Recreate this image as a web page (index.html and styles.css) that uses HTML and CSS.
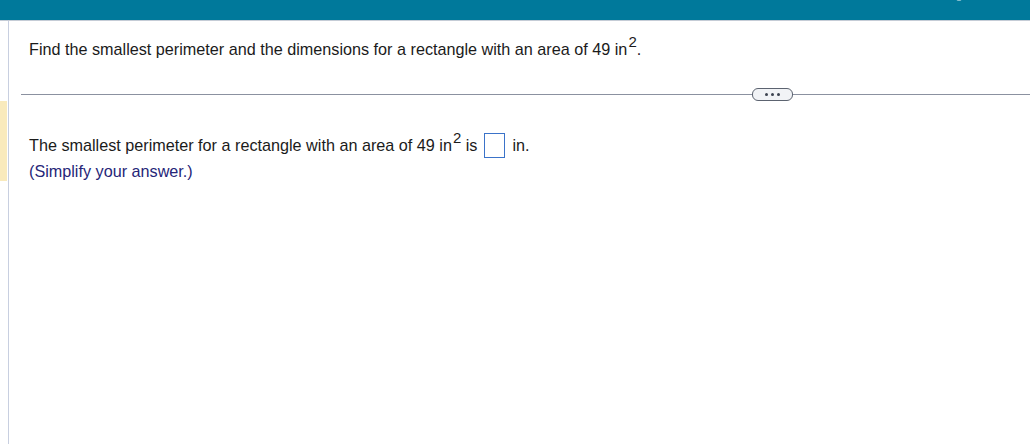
FILE: index.html
```html
<!DOCTYPE html>
<html>
<head>
<meta charset="utf-8">
<link rel="stylesheet" href="styles.css">
</head>
<body>
<header class="topbar">
  <svg class="topicon" width="12" height="5" viewBox="0 0 12 5"><path d="M1 -6 A5 5 0 0 0 11 -6" fill="none" stroke="#fff" stroke-width="3"/></svg>
</header>
<div class="page">
  <div class="marker"></div>
  <div class="rail"></div>
  <main class="content">
    <p class="question">Find the smallest perimeter and the dimensions for a rectangle with an area of 49 in<sup>2</sup>.</p>
    <div class="divider">
      <span class="pill"><i></i><i></i><i></i></span>
    </div>
    <p class="answer">The smallest perimeter for a rectangle with an area of 49 in<sup>2</sup> is <span class="box"></span> in.</p>
    <p class="hint">(Simplify your answer.)</p>
  </main>
</div>
</body>
</html>
```

FILE: styles.css
```css
html, body {
  margin: 0;
  padding: 0;
  background: #fff;
  font-family: "Liberation Sans", Arial, sans-serif;
  font-size: 16.2px;
  color: #1b1b1b;
}
.topbar {
  height: 20px;
  background: #00799b;
  border-bottom: 1px solid #c5ccd6;
  position: relative;
}
.topicon {
  position: absolute;
  left: 953px;
  top: 0;
}
.page {
  position: relative;
  height: 423px;
  display: flex;
}
.marker {
  position: absolute;
  left: 0;
  top: 80px;
  width: 7px;
  height: 80px;
  background: #f9eabc;
}
.rail {
  width: 1px;
  margin-left: 8px;
  background: #c8cfe0;
}
.content {
  flex: 1;
  padding-left: 20px;
}
.question {
  margin: 19px 0 0 0;
  line-height: 18px;
}
sup {
  font-size: 15px;
  vertical-align: 0;
  position: relative;
  top: -8px;
  line-height: 0;
  margin-left: 1px;
}
.divider {
  margin-top: 36px;
  margin-left: -8px;
  height: 1px;
  background: #8b91a0;
  position: relative;
}
.pill {
  position: absolute;
  left: 731px;
  top: -6px;
  width: 39px;
  height: 11px;
  border: 1px solid #5c6370;
  border-radius: 6px;
  background: #f1f3f6;
  display: flex;
  align-items: center;
  justify-content: center;
  gap: 3px;
}
.pill i {
  width: 3px;
  height: 3px;
  background: #3c4350;
  border-radius: 50%;
}
.answer {
  margin: 38px 0 0 0;
  line-height: 20px;
}
.box {
  display: inline-block;
  border: 1px solid #3b73c9;
  vertical-align: -7px;
  margin: 0 3px 0 2px;
  box-sizing: border-box;
  width: 21px;
  height: 25px;
}
.hint {
  margin: 3px 0 0 0;
  line-height: 20px;
  color: #262678;
}
```
